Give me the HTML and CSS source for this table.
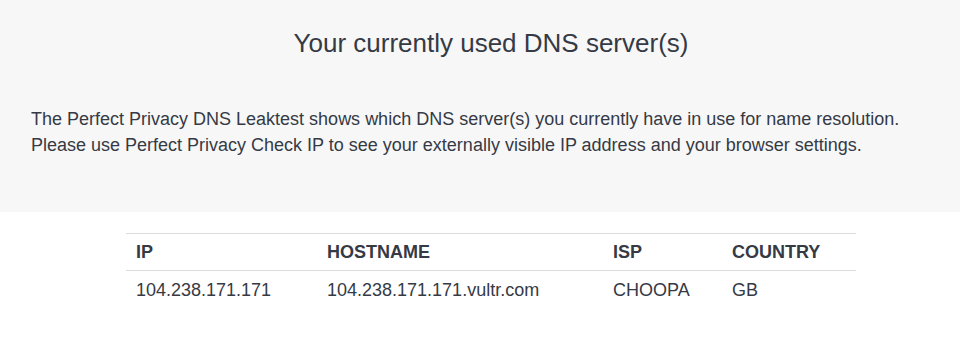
FILE: index.html
```html
<!DOCTYPE html>
<html>
<head>
<meta charset="utf-8">
<link rel="stylesheet" href="styles.css">
</head>
<body>
<section class="hero">
  <h1 class="title">Your currently used DNS server(s)</h1>
  <p class="intro">The Perfect Privacy DNS Leaktest shows which DNS server(s) you currently have in use for name resolution.<br>Please use Perfect Privacy Check IP to see your externally visible IP address and your browser settings.</p>
</section>
<section class="results">
  <table class="dns-table">
    <thead>
      <tr><th class="c-ip">IP</th><th class="c-host">HOSTNAME</th><th class="c-isp">ISP</th><th class="c-country">COUNTRY</th></tr>
    </thead>
    <tbody>
      <tr><td>104.238.171.171</td><td>104.238.171.171.vultr.com</td><td>CHOOPA</td><td>GB</td></tr>
    </tbody>
  </table>
</section>
</body>
</html>
```

FILE: styles.css
```css
html, body {
  margin: 0;
  padding: 0;
  background: #ffffff;
  font-family: "Liberation Sans", Arial, sans-serif;
  color: #353a45;
}
.hero {
  background: #f7f7f7;
  height: 212px;
  padding: 0 9px 0 31px;
  box-sizing: border-box;
  overflow: hidden;
}
.title {
  margin: 0;
  padding-top: 26px;
  font-size: 26px;
  font-weight: normal;
  line-height: 34px;
  text-align: center;
}
.intro {
  margin: 46px 0 0;
  font-size: 18px;
  line-height: 26px;
  white-space: nowrap;
}
.results {
  padding: 21px 0 0 22px;
  display: flex;
  justify-content: center;
}
.dns-table {
  width: 730px;
  border-collapse: collapse;
  font-size: 18px;
}
.dns-table th {
  text-align: left;
  font-weight: bold;
  border-top: 1px solid #dddddd;
  border-bottom: 1px solid #dddddd;
  padding: 8px 10px;
  line-height: 20px;
}
.dns-table td {
  padding: 9px 10px;
  line-height: 20px;
}
.c-ip { width: 171px; }
.c-host { width: 266px; }
.c-isp { width: 99px; }
```
